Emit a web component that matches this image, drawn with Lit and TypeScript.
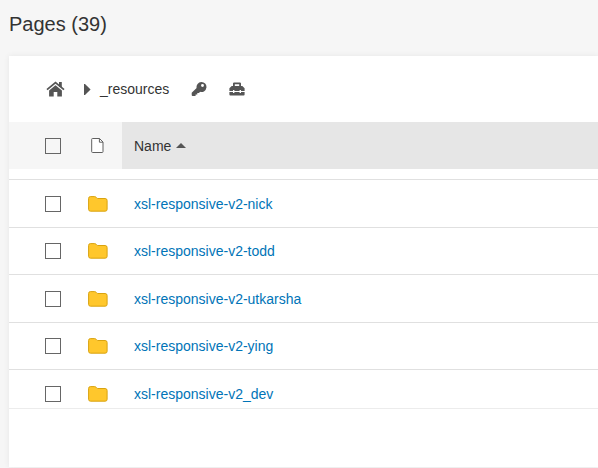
import { LitElement, html, css, svg } from "lit";
import { customElement, property } from "lit/decorators.js";

const homeIcon = svg`<svg class="home" viewBox="0 0 19 16" width="19" height="16" aria-hidden="true">
  <path d="M13 1h2.8v5H13z" fill="currentColor"/>
  <path d="M1 8.6 9.5 1.6 18 8.6" fill="none" stroke="currentColor" stroke-width="1.8"/>
  <path d="M9.5 4.3 15.9 9.6V15.4H11.3V11H7.7V15.4H3.1V9.6Z" fill="currentColor"/></svg>`;

const keyIcon = svg`<svg viewBox="0 0 16 16" width="16" height="16" aria-hidden="true">
  <path fill="currentColor" fill-rule="evenodd" d="M10.3 1a5 5 0 1 1-1.2 9.8L8 11.9H6.3v1.5H4.6v1.4L4.2 15H1.6q-.9 0-.9-.9V11.7L5.6 7A5 5 0 0 1 10.3 1ZM11.5 3a1.4 1.4 0 1 0 0 2.9 1.4 1.4 0 0 0 0-2.9Z"/></svg>`;

const toolboxIcon = svg`<svg viewBox="0 0 16 14" width="16" height="14" aria-hidden="true">
  <path fill="currentColor" fill-rule="evenodd" d="M4 4V1.6Q4 .5 5.1.5h5.8Q12 .5 12 1.6V4h1.3L15.6 6.3V9H12V8h-1.4v1H5.4V8H4v1H.4V6.3L2.7 4ZM5.8 4h4.4V2.2H5.8Z"/>
  <path fill="currentColor" d="M.4 10H4v1h1.4v-1h5.2v1H12v-1h3.6v2.6q0 .9-.9.9H1.3q-.9 0-.9-.9Z"/></svg>`;

const pageIcon = svg`<svg viewBox="0 0 13 15" width="13" height="15" role="img" aria-label="Type">
  <path d="M1.5 .5H8.5L12 4V13.7q0 .8-.8.8H1.5Q.7 14.5.7 13.7V1.3Q.7.5 1.5.5Z" fill="#fff" stroke="#606060" stroke-width="1"/>
  <path d="M8.4 .5V4.2H12" fill="none" stroke="#606060" stroke-width="1"/></svg>`;

const folderIcon = svg`<svg viewBox="0 0 20 16" width="20" height="16" role="img" aria-label="Folder">
  <path d="M2.4.6H6.6q.9 0 1.4.6l.6.7q.5.6 1.3.6h7.2q2 0 2 2v8.9q0 1.8-2 1.8H2.6q-2 0-2-1.8V2.4q0-1.8 1.8-1.8Z" fill="#ffc72c" stroke="#d9a30f" stroke-width="1"/></svg>`;

@customElement("page-crumbs")
class PageCrumbs extends LitElement {
  @property() folder = "";

  static styles = css`
    nav {
      display: flex;
      align-items: center;
      height: 66px;
      padding-left: 37px;
      color: #555;
    }
    a, button {
      display: flex;
      color: inherit;
      padding: 0;
      border: 0;
      background: none;
      text-decoration: none;
      cursor: pointer;
    }
    .arrow {
      margin: 0 9px 0 19px;
    }
    .folder {
      color: #333;
      margin-right: 22px;
      line-height: 20px;
    }
    .key {
      margin-right: 22px;
    }
  `;

  render() {
    return html`<nav aria-label="Breadcrumb">
      <a href="#home" aria-label="Home">${homeIcon}</a>
      <svg class="arrow" viewBox="0 0 7 11" width="7" height="11" aria-hidden="true"><path d="M0 0H1L6.6 5.5 1 11H0Z" fill="currentColor"/></svg>
      <a class="folder" href="#folder">${this.folder}</a>
      <button class="key" aria-label="Access">${keyIcon}</button>
      <button aria-label="Tools">${toolboxIcon}</button>
    </nav>`;
  }
}

@customElement("page-table")
class PageTable extends LitElement {
  @property({ attribute: false }) names: string[] = [];

  static styles = css`
    :host {
      display: block;
      max-height: 286px;
      overflow: hidden;
      border-bottom: 1px solid #ececec;
    }
    table, thead, tbody {
      display: block;
    }
    thead {
      margin-bottom: 10px;
      background: #f6f6f6;
    }
    tr {
      display: grid;
      grid-template-columns: 66px 47px 1fr;
      height: 47px;
    }
    tbody tr {
      height: 48px;
      border-top: 1px solid #e0e0e0;
      box-sizing: border-box;
    }
    tbody tr:nth-child(even) {
      height: 47px;
    }
    th, td {
      display: flex;
      align-items: center;
      padding: 0;
      font-weight: normal;
      line-height: 20px;
    }
    .check {
      padding-left: 36px;
    }
    .type {
      justify-content: center;
      padding-right: 2px;
    }
    .name {
      padding-left: 12px;
    }
    th.name {
      background: #e6e6e6;
    }
    .sort {
      display: flex;
      align-items: center;
      gap: 5px;
      padding: 0;
      border: 0;
      background: none;
      font: inherit;
      color: #333;
    }
    input {
      appearance: none;
      width: 16px;
      height: 16px;
      margin: 0;
      border: 1px solid #666;
      background: #fff;
    }
    th input {
      background: transparent;
    }
    input:checked {
      background: #0072b1;
    }
    a {
      color: #0074b7;
      text-decoration: none;
    }
  `;

  render() {
    return html`<table>
      <thead><tr>
        <th class="check"><input type="checkbox" aria-label="Select all"></th>
        <th class="type">${pageIcon}</th>
        <th class="name" aria-sort="ascending"><button class="sort">Name
          <svg viewBox="0 0 10 5" width="10" height="5" aria-hidden="true"><path d="M0 5 5 0 10 5Z" fill="#555"/></svg></button></th>
      </tr></thead>
      <tbody>${this.names.map((name) => html`<tr>
        <td class="check"><input type="checkbox" aria-label=${`Select ${name}`}></td>
        <td class="type">${folderIcon}</td>
        <td class="name"><a href=${`#${name}`}>${name}</a></td>
      </tr>`)}</tbody>
    </table>`;
  }
}

@customElement("app-root")
class AppRoot extends LitElement {
  static styles = css`
    :host {
      display: block;
      min-height: 100vh;
      box-sizing: border-box;
      padding: 8px 0 1px 9px;
      background: #f6f6f6;
      color: #333;
      font: 14px "Liberation Sans", Arial, sans-serif;
    }
    h1 {
      margin: 0 0 16px;
      font-size: 20px;
      line-height: 32px;
      font-weight: normal;
    }
    main {
      padding-bottom: 58px;
      background: #fff;
      box-shadow: 0 0 5px #e6e6e6;
    }
  `;

  names = ["nick", "todd", "utkarsha", "ying"].map((n) => `xsl-responsive-v2-${n}`).concat("xsl-responsive-v2_dev");

  render() {
    return html`<h1>Pages (39)</h1>
      <main>
        <page-crumbs folder="_resources"></page-crumbs>
        <page-table .names=${this.names}></page-table>
      </main>`;
  }
}
